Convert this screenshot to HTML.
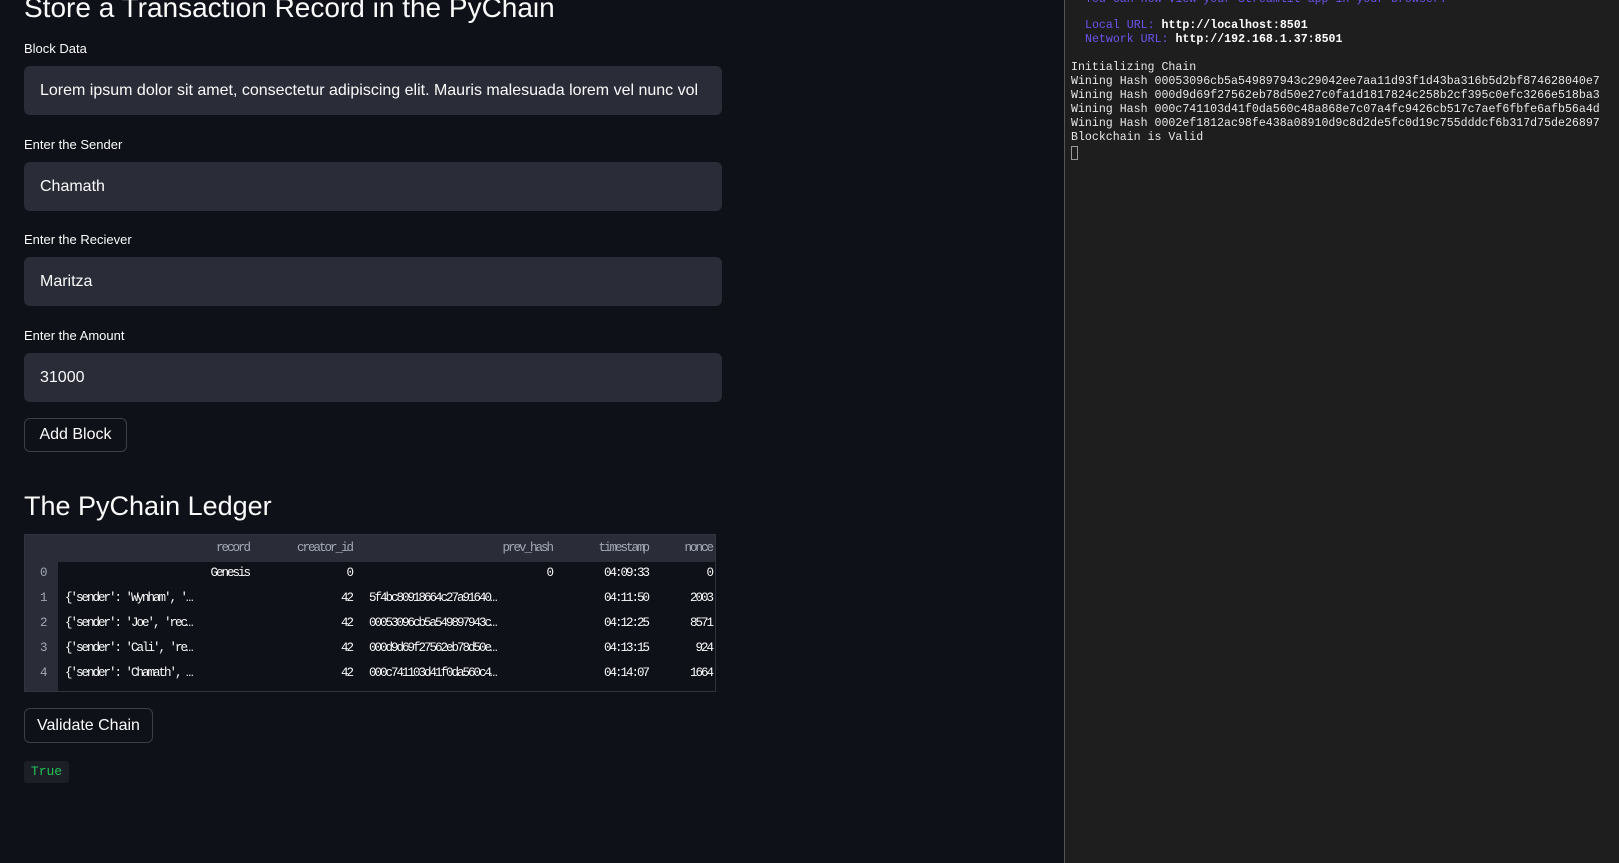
<!DOCTYPE html>
<html><head><meta charset="utf-8"><style>
*{margin:0;padding:0;box-sizing:border-box}
body{width:1619px;height:863px;background:#0e1117;position:relative;overflow:hidden;font-family:"Liberation Sans",sans-serif;color:#fafafa}
.a{position:absolute;white-space:nowrap}
.lbl{font-size:13px;color:#fafafa}
.inp{position:absolute;left:24px;width:698px;height:49px;background:#2a2c37;border-radius:6px;font-size:16px;padding-left:16px;line-height:49px;color:#fafafa;overflow:hidden;white-space:nowrap}
.btn{position:absolute;border:1px solid rgba(250,250,250,.2);border-radius:6px;background:#0e1117;font-size:16px;text-align:center;color:#fafafa}
.tbl{position:absolute;left:24px;top:534px;width:692px;height:158px;border:1px solid #31333f;font-family:"Liberation Mono",monospace;font-size:12.5px;letter-spacing:-2px}
.hdr{position:absolute;left:0;top:0;width:100%;height:27px;background:#2a2c37}
.idx{position:absolute;left:0;top:0;width:33px;height:100%;background:#2a2c37}
.c{position:absolute;white-space:nowrap;line-height:14px}
.term{position:absolute;left:1064px;top:0;width:555px;height:863px;background:#1e1e1e;border-left:1px solid #555;font-family:"Liberation Mono",monospace;font-size:11.6px;color:#e8e8e8}
.term div{position:absolute;left:6px;white-space:nowrap;line-height:14px}
.p{color:#6a55ee}
b{color:#fff}
</style></head><body>
<div class="a" style="left:24px;top:-9px;font-size:28px;line-height:34px">Store a Transaction Record in the PyChain</div>
<div class="a lbl" style="left:24px;top:41px">Block Data</div>
<div class="inp" style="top:66px">Lorem ipsum dolor sit amet, consectetur adipiscing elit. Mauris malesuada lorem vel nunc vol</div>
<div class="a lbl" style="left:24px;top:137px">Enter the Sender</div>
<div class="inp" style="top:162px">Chamath</div>
<div class="a lbl" style="left:24px;top:232px">Enter the Reciever</div>
<div class="inp" style="top:257px">Maritza</div>
<div class="a lbl" style="left:24px;top:328px">Enter the Amount</div>
<div class="inp" style="top:353px">31000</div>
<div class="btn" style="left:24px;top:418px;width:103px;height:34px;line-height:32px">Add Block</div>
<div class="a" style="left:24px;top:490px;font-size:27px;line-height:32px">The PyChain Ledger</div>
<div class="tbl">
<div class="hdr"></div><div class="idx"></div>
<div class="c" style="right:466px;top:6px;color:#a3a8b8">record</div>
<div class="c" style="right:363px;top:6px;color:#a3a8b8">creator_id</div>
<div class="c" style="right:163px;top:6px;color:#a3a8b8">prev_hash</div>
<div class="c" style="right:67px;top:6px;color:#a3a8b8">timestamp</div>
<div class="c" style="right:3px;top:6px;color:#a3a8b8">nonce</div>

<div class="c" style="left:15px;top:31px;color:#a3a8b8">0</div>
<div class="c" style="right:466px;top:31px">Genesis</div>
<div class="c" style="right:363px;top:31px">0</div>
<div class="c" style="right:163px;top:31px">0</div>
<div class="c" style="right:67px;top:31px">04:09:33</div>
<div class="c" style="right:3px;top:31px">0</div>

<div class="c" style="left:15px;top:56px;color:#a3a8b8">1</div>
<div class="c" style="left:40px;top:56px">{'sender': 'Wynham', '…</div>
<div class="c" style="right:363px;top:56px">42</div>
<div class="c" style="left:344px;top:56px">5f4bc80918664c27a91640…</div>
<div class="c" style="right:67px;top:56px">04:11:50</div>
<div class="c" style="right:3px;top:56px">2003</div>

<div class="c" style="left:15px;top:81px;color:#a3a8b8">2</div>
<div class="c" style="left:40px;top:81px">{'sender': 'Joe', 'rec…</div>
<div class="c" style="right:363px;top:81px">42</div>
<div class="c" style="left:344px;top:81px">00053096cb5a549897943c…</div>
<div class="c" style="right:67px;top:81px">04:12:25</div>
<div class="c" style="right:3px;top:81px">8571</div>

<div class="c" style="left:15px;top:106px;color:#a3a8b8">3</div>
<div class="c" style="left:40px;top:106px">{'sender': 'Cali', 're…</div>
<div class="c" style="right:363px;top:106px">42</div>
<div class="c" style="left:344px;top:106px">000d9d69f27562eb78d50e…</div>
<div class="c" style="right:67px;top:106px">04:13:15</div>
<div class="c" style="right:3px;top:106px">924</div>

<div class="c" style="left:15px;top:131px;color:#a3a8b8">4</div>
<div class="c" style="left:40px;top:131px">{'sender': 'Chamath', …</div>
<div class="c" style="right:363px;top:131px">42</div>
<div class="c" style="left:344px;top:131px">000c741103d41f0da560c4…</div>
<div class="c" style="right:67px;top:131px">04:14:07</div>
<div class="c" style="right:3px;top:131px">1664</div>
</div>
<div class="btn" style="left:24px;top:708px;width:129px;height:35px;line-height:33px">Validate Chain</div>
<div class="a" style="left:24px;top:761px;width:45px;height:22px;background:#1c1f26;border-radius:3px;font-family:'Liberation Mono',monospace;font-size:13px;line-height:22px;text-align:center;color:#21c354">True</div>

<div class="term">
<div class="p" style="top:-7px;left:20px">You can now view your Streamlit app in your browser.</div>
<div style="top:19px;left:20px"><span class="p">Local URL:</span> <b>http://localhost:8501</b></div>
<div style="top:33px;left:20px"><span class="p">Network URL:</span> <b>http://192.168.1.37:8501</b></div>
<div style="top:61px">Initializing Chain</div>
<div style="top:75px">Wining Hash 00053096cb5a549897943c29042ee7aa11d93f1d43ba316b5d2bf874628040e7</div>
<div style="top:89px">Wining Hash 000d9d69f27562eb78d50e27c0fa1d1817824c258b2cf395c0efc3266e518ba3</div>
<div style="top:103px">Wining Hash 000c741103d41f0da560c48a868e7c07a4fc9426cb517c7aef6fbfe6afb56a4d</div>
<div style="top:117px">Wining Hash 0002ef1812ac98fe438a08910d9c8d2de5fc0d19c755dddcf6b317d75de26897</div>
<div style="top:131px">Blockchain is Valid</div>
<div style="top:146px;width:7px;height:14px;border:1px solid #999"></div>
</div>
</body></html>
